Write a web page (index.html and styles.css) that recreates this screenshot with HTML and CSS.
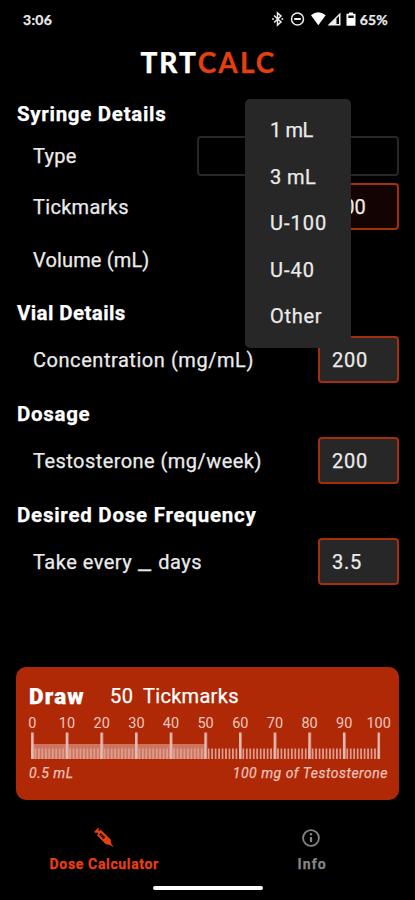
FILE: index.html
```html
<!DOCTYPE html>
<html lang="en">
	<head>
		<meta charset="utf-8" />
		<meta name="viewport" content="width=device-width, initial-scale=1">
		<title>TRTCalc</title>
		<link rel="stylesheet" href="styles.css">
	</head>
	<body>
		<div class="app">
			<div class="status_bar">
				<span class="clock">3:06</span>
				<div class="status_icons">
					<svg width="119" height="18" viewBox="0 0 119 18">
						<!-- bluetooth -->
						<path d="M1 5.500l7 6.500-3.500 3v-12l3.500 3-7 6.500" fill="none" stroke="#eee" stroke-width="1.500"/>
						<circle cx="0" cy="9" r="1" fill="#ddd"/><circle cx="9.300" cy="9" r="1" fill="#ddd"/>
						<!-- do not disturb -->
						<circle cx="24.500" cy="9" r="6" fill="none" stroke="#eee" stroke-width="1.500"/>
						<path d="M21.200 9h6.600" stroke="#eee" stroke-width="2"/>
						<!-- wifi -->
						<path d="M38 5.200Q45.300-.5 52.700 5.200L45.300 15.200z" fill="#fff"/>
						<!-- signal -->
						<path d="M54.500 15.500L67.500 2.500v13z" fill="#eee"/>
						<path d="M63.500 8.500l2.500-2.500v8h-2.500z" fill="#000"/>
						<!-- battery -->
						<path d="M76 2.500h4v1.300h2.500v12h-9v-12H76z" fill="#fff"/>
						<path d="M75.300 5.500h5.400v2.500h-5.400z" fill="#111"/>
					</svg>
					<span class="percent">65%</span>
				</div>
			</div>
			<h1 class="logo"><span class="logo_trt">TRT</span><span class="logo_calc">CALC</span></h1>

			<div class="form">
				<h2 class="h_syringe">Syringe Details</h2>
				<div class="row row_type">
					<label>Type</label>
					<div class="select">
						<ul class="menu">
							<li class="m1">1 mL</li>
							<li class="m2">3 mL</li>
							<li class="m3">U-100</li>
							<li class="m4">U-40</li>
							<li class="m5">Other</li>
						</ul>
					</div>
				</div>
				<div class="row row_ticks">
					<label>Tickmarks</label>
					<div class="field field_dark">100</div>
				</div>
				<div class="row row_volume">
					<label class="l_volume">Volume (mL)</label>
				</div>
				<h2 class="h_vial">Vial Details</h2>
				<div class="row">
					<label class="l_conc">Concentration (mg/mL)</label>
					<div class="field">200</div>
				</div>
				<h2 class="h_dosage">Dosage</h2>
				<div class="row">
					<label class="l_test">Testosterone (mg/week)</label>
					<div class="field">200</div>
				</div>
				<h2 class="h_freq">Desired Dose Frequency</h2>
				<div class="row">
					<label class="l_days">Take every <span class="blank">_</span> days</label>
					<div class="field">3.5</div>
				</div>
			</div>

			<div class="card">
				<div class="draw"><b>Draw</b><span class="amount">50</span><span class="unit">Tickmarks</span></div>
				<svg class="ruler" width="383" height="52" viewBox="0 0 383 52">
					<defs>
						<pattern id="minor" x="15.100" y="0" width="3.465" height="52" patternUnits="userSpaceOnUse">
							<rect width="1.700" height="52" fill="#dd9f92"/>
						</pattern>
						<pattern id="major" x="15.100" y="0" width="34.650" height="52" patternUnits="userSpaceOnUse">
							<rect width="2.600" height="52" fill="#e2bdb5"/>
						</pattern>
					</defs>
					<rect x="15" y="38.500" width="349" height="10.500" fill="url(#minor)"/>
					<rect x="16" y="34" width="174" height="15" fill="#dd9e8f" fill-opacity=".65"/>
					<rect x="15" y="22.500" width="349.200" height="26.500" fill="url(#major)"/>
					<g class="scale">
						<text x="16.400" y="18">0</text>
						<text x="51" y="18">10</text>
						<text x="85.700" y="18">20</text>
						<text x="120.400" y="18">30</text>
						<text x="155" y="18">40</text>
						<text x="189.600" y="18">50</text>
						<text x="224.300" y="18">60</text>
						<text x="259" y="18">70</text>
						<text x="293.600" y="18">80</text>
						<text x="328.200" y="18">90</text>
						<text x="362.700" y="18">100</text>
					</g>
				</svg>
				<div class="notes"><i>0.5 mL</i><i>100 mg of Testosterone</i></div>
			</div>

			<div class="tabs">
				<div class="tab active">
					<svg width="22" height="22" viewBox="0 0 22 22">
						<path d="M1.200 4.800L5.200.8l1 1-1.100 1.200 1.200 1.100 1.500-1.300 9.800 9.700.7 4.200 2.600 3.800-3.800-2.400-4.300-.8-8.800-9 1.200-1.500-1.200-1.200-1.600.4z" fill="#e8400f"/>
						<path d="M6.200 7.600l1.600-1.600 4.400 4.200-1.800 2z" fill="#000"/>
						<path d="M7.500 9l1.700-1M9.200 10.800l1.500-1" stroke="#e8400f" stroke-width=".8"/>
					</svg>
					<span>Dose Calculator</span>
				</div>
				<div class="tab">
					<svg width="22" height="22" viewBox="0 0 22 22">
						<circle cx="11" cy="11" r="7.900" fill="none" stroke="#858585" stroke-width="1.800"/>
						<path d="M11 10v5" stroke="#858585" stroke-width="2.200"/>
						<circle cx="11" cy="7.300" r="1.200" fill="#858585"/>
					</svg>
					<span class="info">Info</span>
				</div>
			</div>
			<div class="home_bar"></div>
		</div>
	</body>
</html>
```
FILE: styles.css
```css
html,body,h1,h2,ul{margin:0;padding:0;}
ul{list-style:none;}
*{box-sizing:border-box;}
body{
	background:#000;
	color:#ebebeb;
	font-family:Roboto, "Liberation Sans", sans-serif;
	font-size:20px;
	-webkit-text-stroke:.25px;
}
.app{
	width:415px;
	height:900px;
	display:flex;
	flex-direction:column;
	overflow:hidden;
}
.status_bar{
	height:38px;
	padding:0 27px 0 23px;
	display:flex;
	align-items:center;
	justify-content:space-between;
	font-family:Lato, sans-serif;
	font-size:14px;
	font-weight:bold;
}
.status_icons{display:flex;align-items:center;}
.status_icons svg{width:119px;margin-right:-32px;overflow:visible;}
.percent{letter-spacing:.2px;}
.clock{letter-spacing:.3px;}
.logo{
	height:45px;
	line-height:48px;
	text-align:center;
	font-family:Lato, sans-serif;
	font-size:28px;
	font-weight:900;
}
.logo_trt{color:#fff;letter-spacing:1.9px;}
.logo_calc{color:#e3400f;font-weight:bold;letter-spacing:2.1px;margin-right:-2px;}
.form{
	height:584px;
	padding:0 16px 0 17px;
}
/* headings sit a bit low, close to the row below */
h2{
	height:54px;
	line-height:62px;
	color:#fff;
	font-size:20.500px;
	font-weight:bold;
}
.h_syringe{letter-spacing:.7px;}
.h_vial{letter-spacing:.4px;}
.h_dosage{letter-spacing:.7px;}
.h_freq{letter-spacing:.75px;}
.row{
	height:47px;
	padding-left:16px;
	display:flex;
	align-items:center;
	justify-content:space-between;
}
label{letter-spacing:.3px;}
.l_volume{letter-spacing:.15px;}
.l_conc{letter-spacing:.55px;}
.l_test{letter-spacing:.45px;}
.l_days{letter-spacing:.5px;}
.blank{display:inline-block;width:15px;transform:scaleX(1.45);transform-origin:left;}
.row_type{height:40px;margin-top:-1px;}
.row_ticks{margin-top:7px;}
.row_volume{height:52px;padding-top:8px;}
.select{
	position:relative;
	width:202px;
	height:40px;
	border:2px solid #272727;
	border-radius:4px;
}
.menu{
	position:absolute;
	z-index:1;
	left:46px;
	top:-39px;
	width:106px;
	height:249px;
	padding:8px 0 8px 25px;
	border-radius:5px;
	background:#272727;
}
.menu li{height:46.500px;line-height:47px;white-space:nowrap;}
.m1{letter-spacing:-.4px;}
.m2{letter-spacing:.4px;}
.m3,.m4{letter-spacing:1px;}
.m5{letter-spacing:.7px;}
.field{
	width:81px;
	height:47px;
	padding-left:12px;
	border:2px solid #a32e10;
	border-radius:4px;
	background:#272727;
	line-height:44px;
	letter-spacing:.8px;
}
.field_dark{background:#140303;letter-spacing:0;}
.card{
	height:133px;
	margin:0 16px;
	border-radius:10px;
	background:#b02907;
	color:#fff;
}
.draw{
	height:43px;
	padding:8px 0 0 13px;
	line-height:43px;
	display:flex;
}
.draw b{width:81px;font-size:22.500px;font-weight:900;letter-spacing:1.2px;}
.draw .amount{width:33px;letter-spacing:.5px;}
.draw .unit{letter-spacing:.3px;}
.ruler{display:block;}
.scale{
	fill:#edc6be;
	font-size:14.500px;
	text-anchor:middle;
	-webkit-text-stroke:0;
}
.notes{
	padding:0 11px 0 13px;
	display:flex;
	justify-content:space-between;
	color:#ecc1b7;
	font-size:14px;
	line-height:22px;
	letter-spacing:.5px;
}
.tabs{
	height:86px;
	padding:27px 0 0;
	display:flex;
}
.tab{
	width:50%;
	display:flex;
	flex-direction:column;
	align-items:center;
	color:#858585;
	font-size:14px;
	font-weight:bold;
	line-height:30px;
	letter-spacing:.65px;
}
.tab svg{flex:none;}
.tab span{height:30px;padding-left:1px;}
.tab .info{letter-spacing:1.1px;padding-left:2px;}
.active{color:#e8400f;}
.home_bar{
	width:110px;
	height:4px;
	margin:0 auto;
	border-radius:2px;
	background:#fff;
}
```
